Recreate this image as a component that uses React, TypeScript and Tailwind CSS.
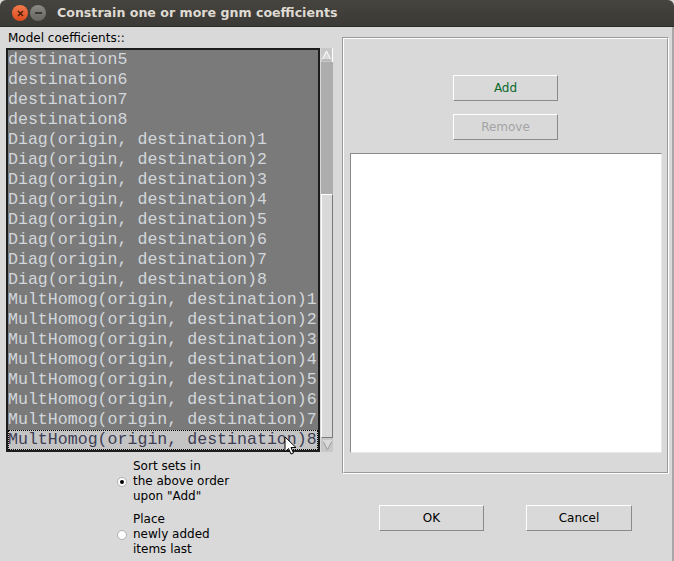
import React from 'react';

const rows = [
  'destination5',
  'destination6',
  'destination7',
  'destination8',
  ...[1, 2, 3, 4, 5, 6, 7, 8].map((n) => `Diag(origin, destination)${n}`),
  ...[1, 2, 3, 4, 5, 6, 7, 8].map((n) => `MultHomog(origin, destination)${n}`),
];

function TkButton({ label, className = '' }: { label: string; className?: string }) {
  return (
    <div
      className={`w-[105px] h-[26px] flex items-center justify-center border border-t-white border-l-white border-r-[#8a8a8a] border-b-[#8a8a8a] bg-[#d9d9d9] text-[12px] ${className}`}
    >
      {label}
    </div>
  );
}

function Radio({ checked, lines }: { checked: boolean; lines: string[] }) {
  return (
    <div className="flex items-center gap-[6px]">
      <div className="w-[10px] h-[10px] rounded-full bg-white border border-[#b0b0b0] flex items-center justify-center">
        {checked && <div className="w-[4px] h-[4px] rounded-full bg-black" />}
      </div>
      <div className="leading-[15px] text-[12px] text-black">
        {lines.map((l) => (
          <div key={l}>{l}</div>
        ))}
      </div>
    </div>
  );
}

export default function App() {
  return (
    <div
      className="w-[674px] h-[561px] bg-[#d9d9d9] flex flex-col overflow-hidden relative"
      style={{ fontFamily: '"DejaVu Sans", "Noto Sans", sans-serif' }}
    >
      {/* Title bar */}
      <div className="h-[27px] shrink-0 bg-gradient-to-b from-[#45443f] to-[#3a3935] rounded-tr-[6px] rounded-tl-[6px] flex items-center pl-[12px] border-b border-[#2c2b28]">
        <div className="w-[16px] h-[16px] rounded-full bg-gradient-to-b from-[#f27a4a] to-[#dc4a1c] flex items-center justify-center">
          <svg width="7" height="7" viewBox="0 0 7 7">
            <path d="M1 1 L6 6 M6 1 L1 6" stroke="#4a1a08" strokeWidth="1.4" />
          </svg>
        </div>
        <div className="w-[16px] h-[16px] ml-[2px] rounded-full bg-gradient-to-b from-[#8a8a86] to-[#66655f] flex items-center justify-center">
          <div className="w-[7px] h-[1.5px] bg-[#3a3935]" />
        </div>
        <div className="ml-[11px] text-[#dfdbd2] font-bold text-[12.6px]">
          Constrain one or more gnm coefficients
        </div>
      </div>

      {/* Body */}
      <div className="flex flex-1 pl-[6px]">
        {/* Left column */}
        <div className="w-[327px] flex flex-col">
          <div className="text-[12px] text-black h-[20px] leading-[20px] mt-[1px] pl-[2px]">Model coefficients::</div>
          <div className="flex h-[404px]">
            <div className="w-[314px] border-2 border-[#1c1c1c] bg-[#7a7a7a] overflow-hidden relative">
              {rows.map((r, i) => {
                const last = i === rows.length - 1;
                return (
                  <div
                    key={r}
                    className={`h-[20px] leading-[20px] whitespace-nowrap text-[16.6px] ${
                      last ? 'bg-[#c4c4c4] text-[#3e3e55] outline-1 outline-dotted outline-black -outline-offset-1' : 'text-[#d2d7dc]'
                    }`}
                    style={{ fontFamily: '"Liberation Mono", "Courier New", monospace' }}
                  >
                    {r}
                  </div>
                );
              })}
            </div>
            {/* Scrollbar */}
            <div className="w-[13px] flex flex-col bg-[#adadad] border-l border-[#d9d9d9]">
              <div className="h-[14px] bg-[#c8c8c8] flex items-center justify-center border-r border-white">
                <svg width="11" height="11" viewBox="0 0 11 11">
                  <path d="M5.5 1 L10 10 L1 10 Z" fill="#d9d9d9" stroke="white" strokeWidth="1" />
                  <path d="M10 10 L1 10" stroke="#8a8a8a" strokeWidth="1" />
                </svg>
              </div>
              <div className="h-[132px]" />
              <div className="flex-1 bg-[#d9d9d9] border border-t-white border-l-white border-r-[#7a7a7a] border-b-[#7a7a7a]" />
              <div className="h-[14px] bg-[#c8c8c8] flex items-center justify-center">
                <svg width="11" height="11" viewBox="0 0 11 11">
                  <path d="M1 1 L10 1 L5.5 10 Z" fill="#d9d9d9" stroke="#9a9a9a" strokeWidth="1" />
                  <path d="M1 1 L10 1" stroke="white" strokeWidth="1" />
                </svg>
              </div>
            </div>
          </div>
          <div className="flex flex-col items-start pt-[7px] gap-[8px] pl-[111px]">
            <Radio checked lines={['Sort sets in', 'the above order', 'upon "Add"']} />
            <Radio checked={false} lines={['Place', 'newly added', 'items last']} />
          </div>
        </div>

        {/* Right column */}
        <div className="ml-[9px] w-[327px] flex flex-col">
          <div className="mt-[10px] h-[437px] border border-t-[#9a9a9a] border-l-[#9a9a9a] border-r-white border-b-white">
            <div className="h-full border border-t-white border-l-white border-r-[#9a9a9a] border-b-[#9a9a9a] flex flex-col items-center">
              <TkButton label="Add" className="mt-[36px] text-[#0a6a2a]" />
              <TkButton label="Remove" className="mt-[13px] text-[#a3a3a3]" />
              <div className="mt-[13px] w-[312px] h-[300px] bg-white border border-t-[#8a8a8a] border-l-[#8a8a8a] border-r-[#e8e8e8] border-b-[#e8e8e8]" />
            </div>
          </div>
          <div className="flex justify-center gap-[42px] mt-[31px]">
            <TkButton label="OK" className="text-black" />
            <TkButton label="Cancel" className="text-black w-[106px]" />
          </div>
        </div>
      </div>
      <div className="absolute right-0 top-[27px] bottom-0 w-[2px] bg-[#a8a8a8]" />

      {/* Mouse cursor */}
      <svg className="absolute left-[284px] top-[436px]" width="14" height="20" viewBox="0 0 14 20">
        <path d="M1 1 L1 16 L4.5 12.5 L7 18 L9.5 17 L7 11.5 L12 11.5 Z" fill="white" stroke="black" strokeWidth="1" strokeLinejoin="round" />
      </svg>
    </div>
  );
}
